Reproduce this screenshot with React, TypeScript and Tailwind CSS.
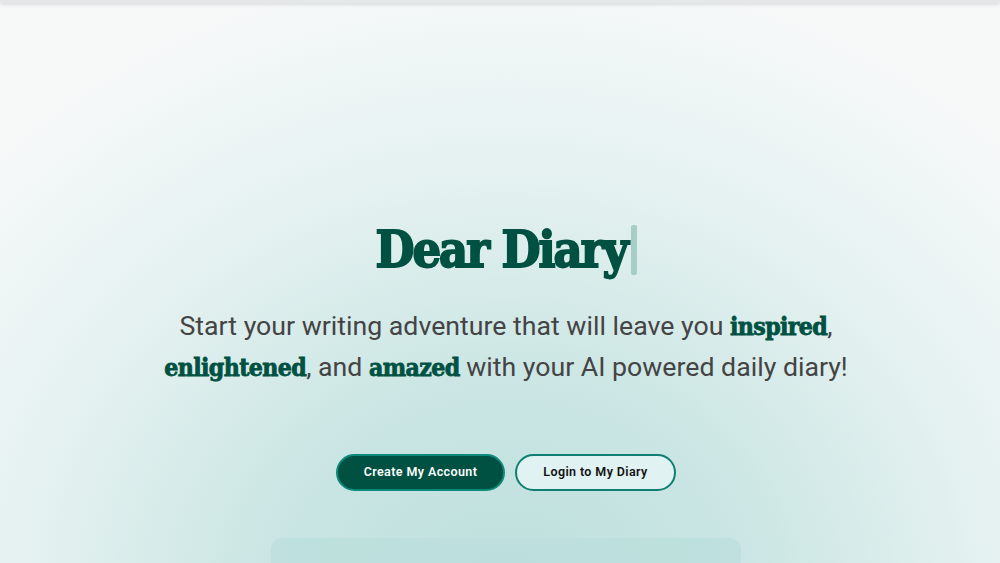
import React from "react";

const slab = { fontFamily: '"DejaVu Serif Condensed", "DejaVu Serif", serif' };

export default function App() {
  return (
    <div
      className="relative w-full h-[563px] overflow-hidden"
      style={{
        background:
          "radial-gradient(ellipse 720px 640px at 506px 600px, #bcdfdc 0%, #cbe6e4 35%, #e3f1f0 65%, #f7f9f9 100%)",
        fontFamily: 'Roboto, "Liberation Sans", sans-serif',
      }}
    >
      <div className="absolute top-0 left-0 right-0 h-[3px] shadow-[0_1px_4px_rgba(0,0,0,0.18)] bg-[#e4e8e8]" />
      <div className="flex flex-col items-center pt-[218px] pl-[12px]">
        <div className="flex items-center">
          <h1
            className="text-[50px] leading-[64px] font-bold text-[#005142] tracking-[-2px] [-webkit-text-stroke:1.8px_#005142]"
            style={slab}
          >
            Dear Diary
          </h1>
          <span className="ml-[4px] w-[6px] h-[50px] rounded-[2px] bg-[#a6cdc6]" />
        </div>
        <p className="mt-[24px] text-center text-[26.7px] leading-[40px] text-[#444444] max-w-[720px]">
          Start your writing adventure that will leave you{" "}
          <b className="font-bold text-[24.6px] tracking-[-0.6px] text-[#005142] [-webkit-text-stroke:0.8px_#005142]" style={slab}>
            inspired
          </b>
          ,{" "}
          <b className="font-bold text-[24.6px] tracking-[-0.6px] text-[#005142] [-webkit-text-stroke:0.8px_#005142]" style={slab}>
            enlightened
          </b>
          , and{" "}
          <b className="font-bold text-[24.6px] tracking-[-0.6px] text-[#005142] [-webkit-text-stroke:0.8px_#005142]" style={slab}>
            amazed
          </b>{" "}
          with your AI powered daily diary!
        </p>
        <div className="mt-[66px] flex gap-[10px]">
          <button className="h-[37px] w-[169px] rounded-full border-2 border-[#0e8a7a] bg-[#005142] text-white text-[12.5px] font-semibold tracking-[0.4px]">
            Create My Account
          </button>
          <button className="h-[37px] w-[161px] rounded-full border-2 border-[#0e7f70] bg-[#e1f2f2] text-[#111] text-[12.5px] font-semibold tracking-[0.4px]">
            Login to My Diary
          </button>
        </div>
        <div className="mt-[47px] w-[470px] h-[40px] rounded-t-[12px] bg-[#bcdfdc]/80" />
      </div>
    </div>
  );
}
